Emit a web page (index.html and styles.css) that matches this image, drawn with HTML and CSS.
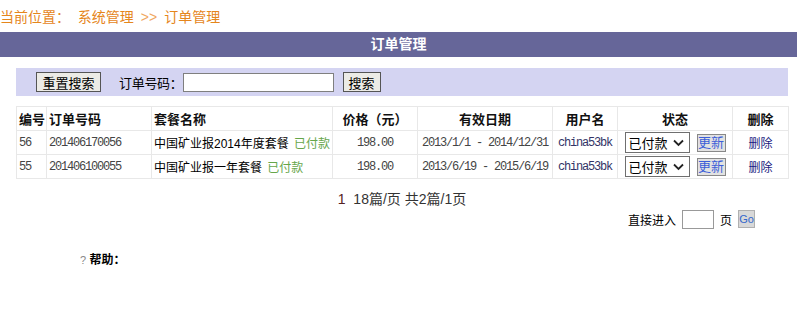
FILE: index.html
```html
<!DOCTYPE html>
<html lang="zh-CN">
<head>
  <meta charset="UTF-8" />
  <title>订单管理</title>
  <link rel="stylesheet" href="styles.css">
</head>
<body>

  <div class="crumb">
    当前位置：&nbsp; <a href="#">系统管理</a><span class="sep">&gt;&gt;</span><a href="#">订单管理</a>
  </div>

  <div class="title-bar">订单管理</div>

  <div class="main">
    <div class="search-bar">
      <button class="btn">重置搜索</button>
      <span class="label">订单号码：</span>
      <input type="text" class="search-input" />
      <button class="btn btn-small">搜索</button>
    </div>

    <table class="orders">
      <colgroup>
        <col style="width:30px" />
        <col style="width:105px" />
        <col style="width:181px" />
        <col style="width:85px" />
        <col style="width:135px" />
        <col style="width:65px" />
        <col style="width:115px" />
        <col style="width:56px" />
      </colgroup>
      <tr>
        <th class="left">编号</th>
        <th class="left">订单号码</th>
        <th class="left">套餐名称</th>
        <th>价格（元）</th>
        <th>有效日期</th>
        <th>用户名</th>
        <th>状态</th>
        <th>删除</th>
      </tr>
      <tr>
        <td class="left mono">56</td>
        <td class="left mono">201406170056</td>
        <td class="left">中国矿业报2014年度套餐 <span class="paid">已付款</span></td>
        <td class="mono">198.00</td>
        <td class="mono">2013/1/1 - 2014/12/31</td>
        <td class="mono user">china53bk</td>
        <td>
          <div class="status">
            <span class="sel">已付款
              <svg width="11" height="8" viewBox="0 0 11 8"><path d="M1 1.5 L5.5 6 L10 1.5" fill="none" stroke="#222" stroke-width="1.8"/></svg>
            </span>
            <button class="btn-update">更新</button>
          </div>
        </td>
        <td><a href="#" class="del">删除</a></td>
      </tr>
      <tr>
        <td class="left mono">55</td>
        <td class="left mono">201406100055</td>
        <td class="left">中国矿业报一年套餐 <span class="paid">已付款</span></td>
        <td class="mono">198.00</td>
        <td class="mono">2013/6/19 - 2015/6/19</td>
        <td class="mono user">china53bk</td>
        <td>
          <div class="status">
            <span class="sel">已付款
              <svg width="11" height="8" viewBox="0 0 11 8"><path d="M1 1.5 L5.5 6 L10 1.5" fill="none" stroke="#222" stroke-width="1.8"/></svg>
            </span>
            <button class="btn-update">更新</button>
          </div>
        </td>
        <td><a href="#" class="del">删除</a></td>
      </tr>
    </table>

    <div class="pager"><span class="cur">1</span>&nbsp;&nbsp;18篇/页 共2篇/1页</div>

    <div class="goto">
      直接进入 <input type="text" class="page-input" /> 页 <button class="btn-go">Go</button>
    </div>

    <div class="help"><span class="q">?</span> 帮助：</div>
  </div>

</body>
</html>
```

FILE: styles.css
```css
body {
  margin: 0;
  padding: 0;
  font-family: "Liberation Sans", "Noto Sans CJK SC", sans-serif;
  font-size: 12px;
  color: #000;
  background: #fff;
}
.crumb {
  height: 32px;
  line-height: 34px;
  font-size: 14px;
  color: #e5861c;
  white-space: nowrap;
}
.crumb a {
  color: #e5861c;
  text-decoration: none;
}
.crumb .sep {
  color: #f0a862;
  margin: 0 7px;
}
.title-bar {
  height: 25px;
  line-height: 25px;
  background: #666699;
  color: #fff;
  font-size: 14px;
  font-weight: bold;
  text-align: center;
}
.main {
  padding: 0 9px 0 16px;
}
.search-bar {
  margin-top: 11px;
  height: 28px;
  background: #d4d4f2;
  display: flex;
  align-items: center;
  padding-left: 20px;
  font-size: 13px;
}
.btn {
  height: 20px;
  width: 65px;
  padding: 0;
  font-family: inherit;
  font-size: 13px;
  background: #ecebe6;
  border: 1px solid #555;
  color: #000;
}
.btn-small {
  width: 38px;
  margin-left: 9px;
}
.label {
  margin-left: 18px;
  letter-spacing: -0.3px;
}
.search-input {
  width: 147px;
  height: 15px;
  padding: 1px;
  border: 1px solid #7f7f7f;
}
.orders {
  margin-top: 10px;
  width: 772px;
  border-collapse: collapse;
  table-layout: fixed;
}
.orders th,
.orders td {
  height: 23px;
  border: 1px solid #e8e8e8;
  padding: 0;
  text-align: center;
  white-space: nowrap;
  overflow: hidden;
}
.orders th {
  font-size: 13px;
  font-weight: bold;
  color: #111;
}
.orders .left {
  text-align: left;
  padding-left: 2px;
}
.mono {
  font-family: "Liberation Mono", "Noto Sans CJK SC", monospace;
  font-size: 12px;
  letter-spacing: -1.2px;
  color: #444;
}
.user {
  color: #333366;
}
.paid {
  color: #66a64a;
  margin-left: 2px;
}
.status {
  display: flex;
  align-items: center;
  justify-content: center;
  gap: 7px;
}
.sel {
  display: inline-flex;
  align-items: center;
  gap: 5px;
  height: 19px;
  width: 57px;
  padding: 0 3px;
  border: 1px solid #6f6f6f;
  font-size: 13px;
  background: #fff;
}
.btn-update {
  height: 18px;
  width: 29px;
  padding: 0;
  font-family: inherit;
  font-size: 13px;
  line-height: 16px;
  color: #3c5fd8;
  background: #e2e2e2;
  border: 1px solid #888;
}
.del {
  color: #1a1a80;
  text-decoration: none;
  font-size: 12px;
}
.pager {
  margin-top: 11px;
  height: 18px;
  line-height: 18px;
  text-align: center;
  font-size: 14px;
  color: #333;
}
.pager .cur {
  color: #552222;
}
.goto {
  height: 22px;
  display: flex;
  justify-content: flex-end;
  align-items: center;
  gap: 6px;
  padding-right: 33px;
  font-size: 12px;
}
.page-input {
  width: 28px;
  height: 15px;
  padding: 1px;
  border: 1px solid #999;
}
.btn-go {
  width: 17px;
  height: 18px;
  padding: 0;
  font-family: inherit;
  font-size: 11px;
  color: #3366cc;
  background: #d8d8d8;
  border: 1px solid #b0b0b0;
}
.help {
  margin-top: 20px;
  height: 20px;
  line-height: 20px;
  padding-left: 64px;
  font-size: 12px;
  font-weight: bold;
}
.help .q {
  font-size: 11px;
  color: #888;
  font-weight: normal;
}
```
